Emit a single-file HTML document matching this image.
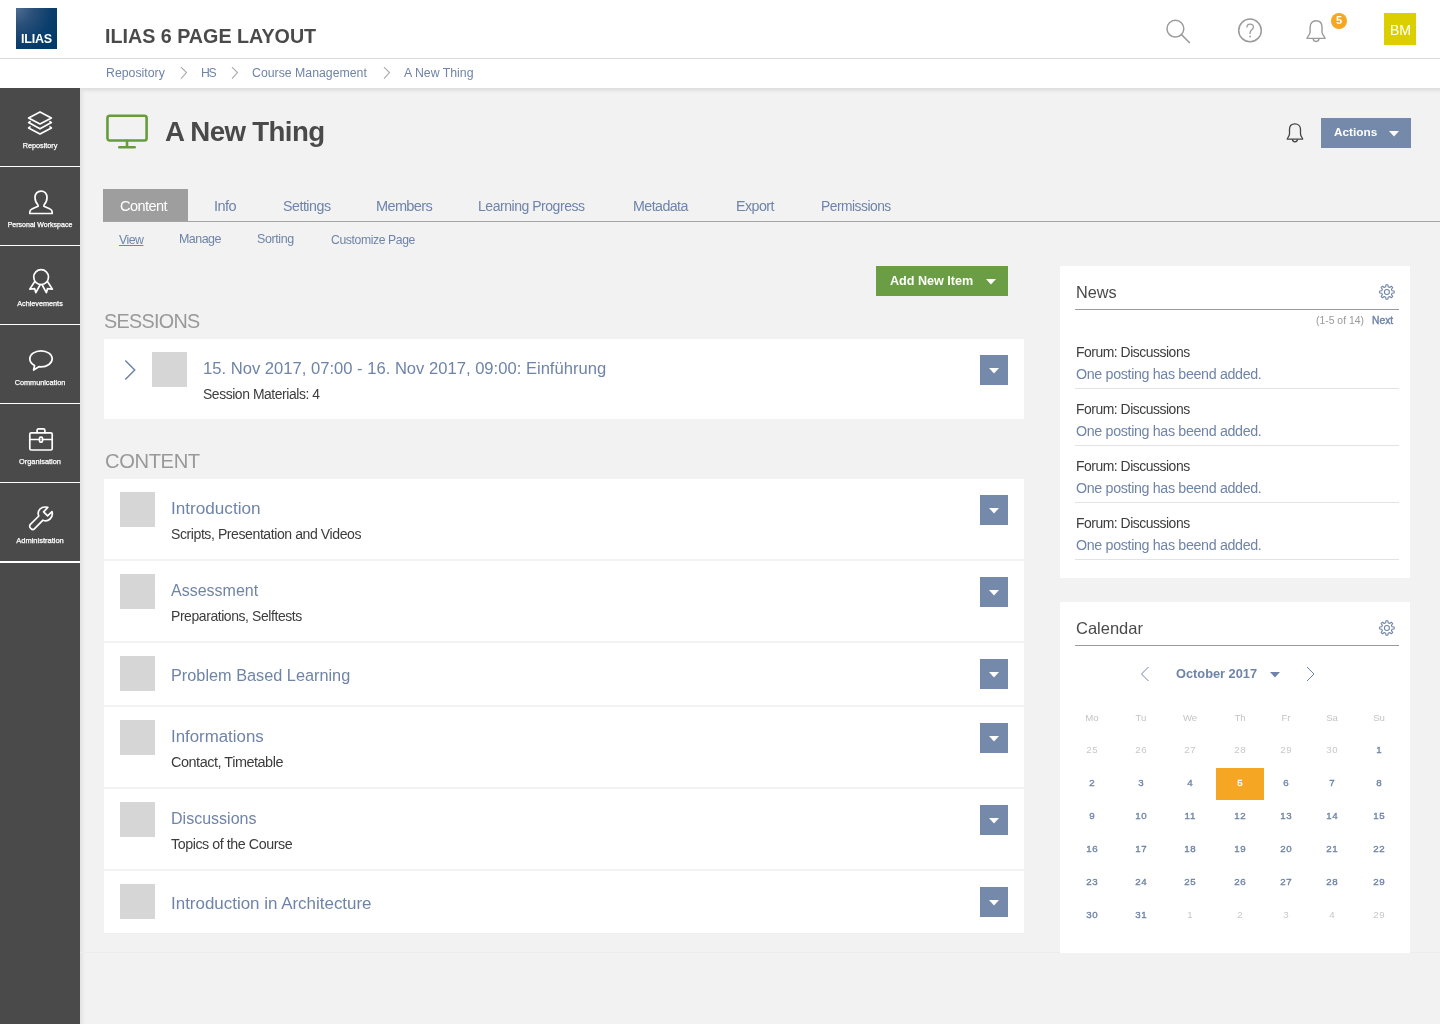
<!DOCTYPE html>
<html><head><meta charset="utf-8">
<style>
*{margin:0;padding:0;box-sizing:border-box}
html,body{width:1440px;height:1024px;overflow:hidden;background:#f2f2f2;font-family:"Liberation Sans",sans-serif}
.abs{position:absolute;display:block}
.t{position:absolute;white-space:nowrap;line-height:1;will-change:transform}
</style></head><body>
<div class="abs" style="left:0px;top:0px;width:1440px;height:58px;background:#fff;"></div>
<div class="abs" style="left:0px;top:58px;width:1440px;height:1px;background:#dadada;"></div>
<div class="abs" style="left:16px;top:8px;width:41px;height:41px;background:radial-gradient(circle at 0 0,#4f6d93 0%,#2a5079 30%,#0b3e6c 62%,#013a69 85%);"></div>
<div class="t" style="left:20.80px;top:32.67px;font-size:12.5px;color:#fff;font-weight:bold;letter-spacing:-0.2px">ILIAS</div>
<div class="t" style="left:105.00px;top:27.26px;font-size:19.7px;color:#4a4a4a;font-weight:bold;">ILIAS 6 PAGE LAYOUT</div>
<svg class="abs" style="left:1160px;top:12px" width="36" height="36" viewBox="0 0 36 36"><circle cx="15.4" cy="16.7" r="8.4" fill="none" stroke="#9b9b9b" stroke-width="1.5"/><path d="M21.5 22.6 L29.8 31" stroke="#9b9b9b" stroke-width="1.5" fill="none"/></svg>
<svg class="abs" style="left:1236px;top:16px" width="28" height="28" viewBox="0 0 28 28"><circle cx="14" cy="14.4" r="11.3" fill="none" stroke="#9b9b9b" stroke-width="1.5"/><path d="M10.9 11.4 C10.9 9.3 12.3 8.1 14.1 8.1 C16 8.1 17.4 9.4 17.4 11.2 C17.4 13.3 14.1 14.4 14.1 16.6 L14.1 18.1" fill="none" stroke="#9b9b9b" stroke-width="1.3"/><circle cx="14.1" cy="20.5" r="0.9" fill="#9b9b9b"/></svg>
<svg class="abs" style="left:1304px;top:17px" width="24" height="28" viewBox="0 0 24 28"><path d="M3 21.4 L21.1 21.4 C21.1 20.2 18 17.8 18 15.2 L18 10.2 C18 6.2 15.6 3.7 12.05 3.7 C8.5 3.7 6.1 6.2 6.1 10.2 L6.1 15.2 C6.1 17.8 3 20.2 3 21.4 Z" fill="none" stroke="#9b9b9b" stroke-width="1.4" stroke-linejoin="round"/><path d="M9.2 21.6 A2.9 2.9 0 0 0 15 21.6" fill="none" stroke="#9b9b9b" stroke-width="1.4"/></svg>
<svg class="abs" style="left:1331px;top:13px" width="16" height="16" viewBox="0 0 16 16"><circle cx="8" cy="8" r="8" fill="#f5a623"/></svg>
<div class="t" style="left:1335.50px;top:15.35px;font-size:11px;color:#fff;font-weight:bold;">5</div>
<div class="abs" style="left:1384px;top:13px;width:32px;height:32px;background:#dccf00;"></div>
<div class="t" style="left:1389.50px;top:23.10px;font-size:14px;color:#fff;font-weight:normal;">BM</div>
<div class="abs" style="left:0px;top:59px;width:1440px;height:29px;background:#fff;"></div>
<div class="t" style="left:106.00px;top:66.95px;font-size:12.3px;color:#6f84a8;font-weight:normal;">Repository</div>
<div class="t" style="left:201.30px;top:67.03px;font-size:12.2px;color:#6f84a8;font-weight:normal;letter-spacing:-1.2px">HS</div>
<div class="t" style="left:252.00px;top:66.95px;font-size:12.3px;color:#6f84a8;font-weight:normal;">Course Management</div>
<div class="t" style="left:404.00px;top:66.95px;font-size:12.3px;color:#6f84a8;font-weight:normal;">A New Thing</div>
<svg class="abs" style="left:180px;top:66px" width="9" height="14" viewBox="0 0 9 14"><path d="M1 1.2 L6.5 6.5 L1 12.6" fill="none" stroke="#a8a8a8" stroke-width="1.1"/></svg>
<svg class="abs" style="left:231px;top:66px" width="9" height="14" viewBox="0 0 9 14"><path d="M1 1.2 L6.5 6.5 L1 12.6" fill="none" stroke="#a8a8a8" stroke-width="1.1"/></svg>
<svg class="abs" style="left:382.5px;top:66px" width="9" height="14" viewBox="0 0 9 14"><path d="M1 1.2 L6.5 6.5 L1 12.6" fill="none" stroke="#a8a8a8" stroke-width="1.1"/></svg>
<div class="abs" style="left:0px;top:88px;width:80px;height:936px;background:#4a4a4a;"></div>
<div class="abs" style="left:0px;top:166px;width:80px;height:1px;background:#fff;"></div>
<div class="t" style="left:0;width:80px;text-align:center;top:141.84px;font-size:7.25px;color:#fff;-webkit-text-stroke:0.25px #fff">Repository</div>
<div class="abs" style="left:0px;top:245px;width:80px;height:1px;background:#fff;"></div>
<div class="t" style="left:0;width:80px;text-align:center;top:221.03px;font-size:7.02px;color:#fff;-webkit-text-stroke:0.25px #fff">Personal Workspace</div>
<div class="abs" style="left:0px;top:324px;width:80px;height:1px;background:#fff;"></div>
<div class="t" style="left:0;width:80px;text-align:center;top:299.84px;font-size:7.25px;color:#fff;-webkit-text-stroke:0.25px #fff">Achievements</div>
<div class="abs" style="left:0px;top:403px;width:80px;height:1px;background:#fff;"></div>
<div class="t" style="left:0;width:80px;text-align:center;top:378.80px;font-size:7.3px;color:#fff;-webkit-text-stroke:0.25px #fff">Communication</div>
<div class="abs" style="left:0px;top:482px;width:80px;height:1px;background:#fff;"></div>
<div class="t" style="left:0;width:80px;text-align:center;top:457.73px;font-size:7.38px;color:#fff;-webkit-text-stroke:0.25px #fff">Organisation</div>
<div class="abs" style="left:0px;top:561px;width:80px;height:2px;background:#fff;"></div>
<div class="t" style="left:0;width:80px;text-align:center;top:536.62px;font-size:7.5px;color:#fff;-webkit-text-stroke:0.25px #fff">Administration</div>
<svg class="abs" style="left:26px;top:109px" width="28" height="28" viewBox="0 0 28 28"><path d="M2.6 8.9 L14 2.9 L25.4 8.9 L14 14.9 Z" fill="none" stroke="#fff" stroke-width="1.7" stroke-linejoin="round" stroke-linecap="round"/><path d="M4 12.6 L2.6 13.6 L14 19.8 L25.4 13.6 L24 12.6" fill="none" stroke="#fff" stroke-width="1.7" stroke-linejoin="round" stroke-linecap="round"/><path d="M4 17.9 L2.6 18.9 L14 25 L25.4 18.9 L24 17.9" fill="none" stroke="#fff" stroke-width="1.7" stroke-linejoin="round" stroke-linecap="round"/></svg>
<svg class="abs" style="left:26px;top:188px" width="28" height="28" viewBox="0 0 28 28"><path d="M15 3.1 C18.6 3.1 21 5.8 21 9.6 C21 12.8 19.8 15.2 18 17 L17.9 18.2 L23.6 20.8 C25.3 21.6 26.2 22.5 26.2 24 L26.2 25.5 L3.8 25.5 L3.8 24 C3.8 22.5 4.7 21.6 6.4 20.8 L12.1 18.2 L12 17 C10.2 15.2 9 12.8 9 9.6 C9 5.8 11.4 3.1 15 3.1 Z" fill="none" stroke="#fff" stroke-width="1.7" stroke-linejoin="round" stroke-linecap="round"/></svg>
<svg class="abs" style="left:26px;top:267px" width="28" height="28" viewBox="0 0 28 28"><circle cx="15.1" cy="10.1" r="7.4" fill="none" stroke="#fff" stroke-width="1.7" stroke-linejoin="round" stroke-linecap="round"/><path d="M8.6 14.8 L3.8 22.1 L8.7 21.7 L9.8 25.6 L14 18" fill="none" stroke="#fff" stroke-width="1.7" stroke-linejoin="round" stroke-linecap="round"/><path d="M21.6 14.8 L26.4 22.1 L21.5 21.7 L20.4 25.6 L16.2 18" fill="none" stroke="#fff" stroke-width="1.7" stroke-linejoin="round" stroke-linecap="round"/></svg>
<svg class="abs" style="left:26px;top:346px" width="28" height="28" viewBox="0 0 28 28"><path d="M15 4.8 C21.2 4.8 26.2 8.4 26.2 12.8 C26.2 17.2 21.2 20.8 15 20.8 C14.2 20.8 13.6 20.8 12.9 20.7 L7.6 24 L8.6 19.4 C5.6 18 3.8 15.6 3.8 12.8 C3.8 8.4 8.8 4.8 15 4.8 Z" fill="none" stroke="#fff" stroke-width="1.7" stroke-linejoin="round" stroke-linecap="round"/></svg>
<svg class="abs" style="left:26px;top:426px" width="28" height="28" viewBox="0 0 28 28"><rect x="3.8" y="6.8" width="22.4" height="17.2" rx="1.4" fill="none" stroke="#fff" stroke-width="1.7" stroke-linejoin="round" stroke-linecap="round"/><path d="M11.1 6.6 L11.1 4.4 C11.1 3.4 11.6 2.8 12.6 2.8 L17.4 2.8 C18.4 2.8 18.9 3.4 18.9 4.4 L18.9 6.6" fill="none" stroke="#fff" stroke-width="1.7" stroke-linejoin="round" stroke-linecap="round"/><path d="M3.8 13.5 L13.5 13.5 M16.5 13.5 L26.2 13.5" fill="none" stroke="#fff" stroke-width="1.7" stroke-linejoin="round" stroke-linecap="round"/><rect x="13.5" y="11.1" width="3" height="5.1" rx="1.2" fill="none" stroke="#fff" stroke-width="1.7" stroke-linejoin="round" stroke-linecap="round"/></svg>
<svg class="abs" style="left:26px;top:504px" width="28" height="28" viewBox="0 0 28 28"><path d="M21.8 3.4 L17.6 7.8 L21.6 11.8 L26 7.6 C26.8 10.4 26 13.2 24 15 C22 16.8 19.2 17.2 17 16.2 L8.6 24.6 C7.6 25.6 6 25.6 5 24.6 L4.4 24 C3.4 23 3.4 21.4 4.4 20.4 L12.8 12 C11.8 9.8 12.2 7 14 5 C15.8 3.2 18.8 2.6 21.8 3.4 Z" fill="none" stroke="#fff" stroke-width="1.7" stroke-linejoin="round" stroke-linecap="round"/></svg>
<div class="abs" style="left:80px;top:88px;width:1360px;height:5px;background:linear-gradient(#dcdcdc,rgba(242,242,242,0));"></div>
<div class="abs" style="left:80px;top:88px;width:5px;height:936px;background:linear-gradient(90deg,#e2e2e2,rgba(242,242,242,0));"></div>
<svg class="abs" style="left:104px;top:113px" width="46" height="38" viewBox="0 0 46 38"><rect x="3.45" y="2.7" width="39.15" height="24.8" rx="2.2" fill="none" stroke="#659c3c" stroke-width="2.6"/><path d="M23 28 L23 34 M15.3 34.3 L30.7 34.3" stroke="#659c3c" stroke-width="2.6" stroke-linecap="round" fill="none"/></svg>
<div class="t" style="left:165.00px;top:118.09px;font-size:27.66px;color:#4a4a4a;font-weight:bold;letter-spacing:-0.638px;">A New Thing</div>
<svg class="abs" style="left:1284px;top:121px" width="22" height="24" viewBox="0 0 22 24"><path d="M3.2 18.1 L18.7 18.1 C18.7 17.2 16.5 15 16.5 13 L16.5 8.5 C16.5 5 14.2 2.9 10.95 2.9 C7.7 2.9 5.5 5 5.5 8.5 L5.5 13 C5.5 15 3.2 17.2 3.2 18.1 Z" fill="none" stroke="#444" stroke-width="1.3" stroke-linejoin="round"/><path d="M8.4 18.3 C8.4 21.6 13.5 21.6 13.5 18.3" fill="none" stroke="#444" stroke-width="1.3"/></svg>
<div class="abs" style="left:1321px;top:118px;width:90px;height:30px;background:#7589aa;"></div>
<div class="t" style="left:1334.00px;top:127.47px;font-size:11.8px;color:#fff;font-weight:bold;">Actions</div>
<svg class="abs" style="left:1389px;top:131px" width="10" height="6" viewBox="0 0 10 6"><path d="M0 0 L10 0 L5 5.5 Z" fill="#fff"/></svg>
<div class="abs" style="left:103px;top:221px;width:1337px;height:1px;background:#a5a5a5;"></div>
<div class="abs" style="left:103px;top:189px;width:85px;height:32px;background:#9e9e9e;"></div>
<div class="t" style="left:120.00px;top:199.13px;font-size:14.55px;color:#fff;font-weight:normal;letter-spacing:-0.555px;">Content</div>
<div class="t" style="left:214.00px;top:199.13px;font-size:14.55px;color:#6f84a8;font-weight:normal;letter-spacing:-0.528px;">Info</div>
<div class="t" style="left:282.50px;top:199.40px;font-size:14.23px;color:#6f84a8;font-weight:normal;letter-spacing:-0.480px;">Settings</div>
<div class="t" style="left:376.00px;top:199.13px;font-size:14.55px;color:#6f84a8;font-weight:normal;letter-spacing:-0.660px;">Members</div>
<div class="t" style="left:478.20px;top:198.98px;font-size:14.02px;color:#6f84a8;font-weight:normal;letter-spacing:-0.470px;">Learning Progress</div>
<div class="t" style="left:632.50px;top:199.40px;font-size:14.23px;color:#6f84a8;font-weight:normal;letter-spacing:-0.554px;">Metadata</div>
<div class="t" style="left:735.60px;top:199.40px;font-size:14.23px;color:#6f84a8;font-weight:normal;letter-spacing:-0.538px;">Export</div>
<div class="t" style="left:820.60px;top:199.77px;font-size:13.8px;color:#6f84a8;font-weight:normal;letter-spacing:-0.490px;">Permissions</div>
<div class="t" style="left:119.00px;top:233.54px;font-size:12.3px;color:#6f84a8;font-weight:normal;letter-spacing:-0.502px;text-decoration:underline;text-underline-offset:1px">View</div>
<div class="t" style="left:178.70px;top:233.41px;font-size:12.46px;color:#6f84a8;font-weight:normal;letter-spacing:-0.513px;">Manage</div>
<div class="t" style="left:256.60px;top:233.41px;font-size:12.46px;color:#6f84a8;font-weight:normal;letter-spacing:-0.375px;">Sorting</div>
<div class="t" style="left:331.20px;top:233.64px;font-size:12.19px;color:#6f84a8;font-weight:normal;letter-spacing:-0.389px;">Customize Page</div>
<div class="abs" style="left:876px;top:266px;width:132px;height:30px;background:#6b9e44;"></div>
<div class="t" style="left:890.00px;top:275.29px;font-size:12.6px;color:#fff;font-weight:bold;">Add New Item</div>
<svg class="abs" style="left:986px;top:279px" width="10" height="6" viewBox="0 0 10 6"><path d="M0 0 L10 0 L5 5.5 Z" fill="#fff"/></svg>
<div class="t" style="left:104.00px;top:311.67px;font-size:19.8px;color:#999;font-weight:normal;letter-spacing:-0.7px">SESSIONS</div>
<div class="abs" style="left:104px;top:339px;width:920px;height:80px;background:#fff;"></div>
<svg class="abs" style="left:120px;top:356px" width="20" height="28" viewBox="0 0 20 28"><path d="M5.3 4.5 L14.7 14.1 L5.3 23.5" fill="none" stroke="#6f84a8" stroke-width="1.5"/></svg>
<div class="abs" style="left:152px;top:352px;width:35px;height:35px;background:#d6d6d6;"></div>
<div class="t" style="left:203.00px;top:361.09px;font-size:16.6px;color:#6f84a8;font-weight:normal;">15. Nov 2017, 07:00 - 16. Nov 2017, 09:00: Einführung</div>
<div class="t" style="left:203.00px;top:387.88px;font-size:13.91px;color:#3c3c3c;font-weight:normal;letter-spacing:-0.431px;">Session Materials: 4</div>
<div class="abs" style="left:980px;top:355px;width:28px;height:30px;background:#7589aa;"></div>
<svg class="abs" style="left:989px;top:368px" width="10" height="6" viewBox="0 0 10 6"><path d="M0 0 L10 0 L5 5.5 Z" fill="#fff"/></svg>
<div class="t" style="left:104.50px;top:451.33px;font-size:20.2px;color:#999;font-weight:normal;letter-spacing:-0.4px">CONTENT</div>
<div class="abs" style="left:104px;top:479px;width:920px;height:80px;background:#fff;"></div>
<div class="abs" style="left:120px;top:492px;width:35px;height:35px;background:#d6d6d6;"></div>
<div class="t" style="left:171.00px;top:500.42px;font-size:17.15px;color:#6f84a8;font-weight:normal;">Introduction</div>
<div class="t" style="left:171.00px;top:527.04px;font-size:14.07px;color:#3c3c3c;font-weight:normal;letter-spacing:-0.430px;">Scripts, Presentation and Videos</div>
<div class="abs" style="left:980px;top:495px;width:28px;height:30px;background:#7589aa;"></div>
<svg class="abs" style="left:989px;top:508px" width="10" height="6" viewBox="0 0 10 6"><path d="M0 0 L10 0 L5 5.5 Z" fill="#fff"/></svg>
<div class="abs" style="left:104px;top:561px;width:920px;height:80px;background:#fff;"></div>
<div class="abs" style="left:120px;top:574px;width:35px;height:35px;background:#d6d6d6;"></div>
<div class="t" style="left:171.00px;top:583.40px;font-size:16.0px;color:#6f84a8;font-weight:normal;">Assessment</div>
<div class="t" style="left:171.00px;top:609.93px;font-size:13.96px;color:#3c3c3c;font-weight:normal;letter-spacing:-0.416px;">Preparations, Selftests</div>
<div class="abs" style="left:980px;top:577px;width:28px;height:30px;background:#7589aa;"></div>
<svg class="abs" style="left:989px;top:590px" width="10" height="6" viewBox="0 0 10 6"><path d="M0 0 L10 0 L5 5.5 Z" fill="#fff"/></svg>
<div class="abs" style="left:104px;top:643px;width:920px;height:62px;background:#fff;"></div>
<div class="abs" style="left:120px;top:656px;width:35px;height:35px;background:#d6d6d6;"></div>
<div class="t" style="left:171.00px;top:666.94px;font-size:16.3px;color:#6f84a8;font-weight:normal;">Problem Based Learning</div>
<div class="abs" style="left:980px;top:659px;width:28px;height:30px;background:#7589aa;"></div>
<svg class="abs" style="left:989px;top:672px" width="10" height="6" viewBox="0 0 10 6"><path d="M0 0 L10 0 L5 5.5 Z" fill="#fff"/></svg>
<div class="abs" style="left:104px;top:707px;width:920px;height:80px;background:#fff;"></div>
<div class="abs" style="left:120px;top:720px;width:35px;height:35px;background:#d6d6d6;"></div>
<div class="t" style="left:171.00px;top:728.68px;font-size:16.85px;color:#6f84a8;font-weight:normal;">Informations</div>
<div class="t" style="left:171.00px;top:754.72px;font-size:14.45px;color:#3c3c3c;font-weight:normal;letter-spacing:-0.466px;">Contact, Timetable</div>
<div class="abs" style="left:980px;top:723px;width:28px;height:30px;background:#7589aa;"></div>
<svg class="abs" style="left:989px;top:736px" width="10" height="6" viewBox="0 0 10 6"><path d="M0 0 L10 0 L5 5.5 Z" fill="#fff"/></svg>
<div class="abs" style="left:104px;top:789px;width:920px;height:80px;background:#fff;"></div>
<div class="abs" style="left:120px;top:802px;width:35px;height:35px;background:#d6d6d6;"></div>
<div class="t" style="left:171.00px;top:810.16px;font-size:16.05px;color:#6f84a8;font-weight:normal;">Discussions</div>
<div class="t" style="left:171.00px;top:836.86px;font-size:14.28px;color:#3c3c3c;font-weight:normal;letter-spacing:-0.446px;">Topics of the Course</div>
<div class="abs" style="left:980px;top:805px;width:28px;height:30px;background:#7589aa;"></div>
<svg class="abs" style="left:989px;top:818px" width="10" height="6" viewBox="0 0 10 6"><path d="M0 0 L10 0 L5 5.5 Z" fill="#fff"/></svg>
<div class="abs" style="left:104px;top:871px;width:920px;height:62px;background:#fff;"></div>
<div class="abs" style="left:120px;top:884px;width:35px;height:35px;background:#d6d6d6;"></div>
<div class="t" style="left:171.00px;top:896.39px;font-size:16.95px;color:#6f84a8;font-weight:normal;">Introduction in Architecture</div>
<div class="abs" style="left:980px;top:887px;width:28px;height:30px;background:#7589aa;"></div>
<svg class="abs" style="left:989px;top:900px" width="10" height="6" viewBox="0 0 10 6"><path d="M0 0 L10 0 L5 5.5 Z" fill="#fff"/></svg>
<div class="abs" style="left:80px;top:952px;width:1360px;height:1px;background:#ececec;"></div>
<div class="abs" style="left:104px;top:933px;width:920px;height:1px;background:#eeeeee;"></div>
<div class="abs" style="left:1060px;top:266px;width:350px;height:312px;background:#fff;"></div>
<div class="t" style="left:1076.00px;top:284.14px;font-size:16.3px;color:#4a4a4a;font-weight:normal;">News</div>
<svg class="abs" style="left:1377px;top:282px" width="20" height="20" viewBox="0 0 20 20"><path d="M8.62 4.86 L8.95 2.76 L10.85 2.76 L11.18 4.86 L12.63 5.46 L14.34 4.21 L15.69 5.56 L14.44 7.27 L15.04 8.72 L17.14 9.05 L17.14 10.95 L15.04 11.28 L14.44 12.73 L15.69 14.44 L14.34 15.79 L12.63 14.54 L11.18 15.14 L10.85 17.24 L8.95 17.24 L8.62 15.14 L7.17 14.54 L5.46 15.79 L4.11 14.44 L5.36 12.73 L4.76 11.28 L2.66 10.95 L2.66 9.05 L4.76 8.72 L5.36 7.27 L4.11 5.56 L5.46 4.21 L7.17 5.46 Z" fill="none" stroke="#6f84a8" stroke-width="1.1" stroke-linejoin="round"/><circle cx="9.9" cy="10" r="2.5" fill="none" stroke="#6f84a8" stroke-width="1.1"/></svg>
<div class="abs" style="left:1075px;top:309px;width:324px;height:1px;background:#9b9b9b;"></div>
<div class="t" style="left:1316.00px;top:316.36px;font-size:10.4px;color:#999;font-weight:normal;">(1-5 of 14)</div>
<div class="t" style="left:1372.00px;top:316.05px;font-size:10.3px;color:#6f84a8;font-weight:normal;-webkit-text-stroke:0.4px #6f84a8">Next</div>
<div class="t" style="left:1076.00px;top:346.18px;font-size:13.91px;color:#3c3c3c;font-weight:normal;letter-spacing:-0.470px;">Forum: Discussions</div>
<div class="t" style="left:1076.00px;top:367.36px;font-size:14.28px;color:#6f84a8;font-weight:normal;letter-spacing:-0.344px;">One posting has beend added.</div>
<div class="abs" style="left:1075px;top:388px;width:324px;height:1px;background:#e3e3e3;"></div>
<div class="t" style="left:1076.00px;top:403.18px;font-size:13.91px;color:#3c3c3c;font-weight:normal;letter-spacing:-0.470px;">Forum: Discussions</div>
<div class="t" style="left:1076.00px;top:424.36px;font-size:14.28px;color:#6f84a8;font-weight:normal;letter-spacing:-0.344px;">One posting has beend added.</div>
<div class="abs" style="left:1075px;top:445px;width:324px;height:1px;background:#e3e3e3;"></div>
<div class="t" style="left:1076.00px;top:460.18px;font-size:13.91px;color:#3c3c3c;font-weight:normal;letter-spacing:-0.470px;">Forum: Discussions</div>
<div class="t" style="left:1076.00px;top:481.36px;font-size:14.28px;color:#6f84a8;font-weight:normal;letter-spacing:-0.344px;">One posting has beend added.</div>
<div class="abs" style="left:1075px;top:502px;width:324px;height:1px;background:#e3e3e3;"></div>
<div class="t" style="left:1076.00px;top:517.18px;font-size:13.91px;color:#3c3c3c;font-weight:normal;letter-spacing:-0.470px;">Forum: Discussions</div>
<div class="t" style="left:1076.00px;top:538.36px;font-size:14.28px;color:#6f84a8;font-weight:normal;letter-spacing:-0.344px;">One posting has beend added.</div>
<div class="abs" style="left:1075px;top:559px;width:324px;height:1px;background:#e3e3e3;"></div>
<div class="abs" style="left:1060px;top:602px;width:350px;height:351px;background:#fff;"></div>
<div class="t" style="left:1076.00px;top:619.98px;font-size:16.5px;color:#4a4a4a;font-weight:normal;">Calendar</div>
<svg class="abs" style="left:1377px;top:618px" width="20" height="20" viewBox="0 0 20 20"><path d="M8.62 4.86 L8.95 2.76 L10.85 2.76 L11.18 4.86 L12.63 5.46 L14.34 4.21 L15.69 5.56 L14.44 7.27 L15.04 8.72 L17.14 9.05 L17.14 10.95 L15.04 11.28 L14.44 12.73 L15.69 14.44 L14.34 15.79 L12.63 14.54 L11.18 15.14 L10.85 17.24 L8.95 17.24 L8.62 15.14 L7.17 14.54 L5.46 15.79 L4.11 14.44 L5.36 12.73 L4.76 11.28 L2.66 10.95 L2.66 9.05 L4.76 8.72 L5.36 7.27 L4.11 5.56 L5.46 4.21 L7.17 5.46 Z" fill="none" stroke="#6f84a8" stroke-width="1.1" stroke-linejoin="round"/><circle cx="9.9" cy="10" r="2.5" fill="none" stroke="#6f84a8" stroke-width="1.1"/></svg>
<div class="abs" style="left:1075px;top:645px;width:324px;height:1px;background:#9b9b9b;"></div>
<svg class="abs" style="left:1138px;top:665px" width="14" height="18" viewBox="0 0 14 18"><path d="M10.5 2 L3.5 9 L10.5 16" fill="none" stroke="#6f84a8" stroke-width="1"/></svg>
<svg class="abs" style="left:1303px;top:665px" width="14" height="18" viewBox="0 0 14 18"><path d="M4 2 L11 9 L4 16" fill="none" stroke="#6f84a8" stroke-width="1"/></svg>
<div class="t" style="left:1176.00px;top:668.32px;font-size:12.8px;color:#6f84a8;font-weight:bold;">October 2017</div>
<svg class="abs" style="left:1270px;top:672px" width="10" height="6" viewBox="0 0 10 6"><path d="M0 0 L10 0 L5 5.5 Z" fill="#6f84a8"/></svg>
<div class="t" style="left:1066.50px;width:50px;text-align:center;top:713.34px;font-size:9.6px;color:#c4c4c4;font-weight:normal;">Mo</div>
<div class="t" style="left:1115.60px;width:50px;text-align:center;top:713.34px;font-size:9.6px;color:#c4c4c4;font-weight:normal;">Tu</div>
<div class="t" style="left:1164.80px;width:50px;text-align:center;top:713.34px;font-size:9.6px;color:#c4c4c4;font-weight:normal;">We</div>
<div class="t" style="left:1215.00px;width:50px;text-align:center;top:713.34px;font-size:9.6px;color:#c4c4c4;font-weight:normal;">Th</div>
<div class="t" style="left:1261.00px;width:50px;text-align:center;top:713.34px;font-size:9.6px;color:#c4c4c4;font-weight:normal;">Fr</div>
<div class="t" style="left:1307.00px;width:50px;text-align:center;top:713.34px;font-size:9.6px;color:#c4c4c4;font-weight:normal;">Sa</div>
<div class="t" style="left:1354.30px;width:50px;text-align:center;top:713.34px;font-size:9.6px;color:#c4c4c4;font-weight:normal;">Su</div>
<div class="abs" style="left:1216px;top:768px;width:48px;height:32px;background:#f5a623;"></div>
<div class="t" style="left:1066.50px;width:50px;text-align:center;top:745.46px;font-size:9.7px;color:#c8c8c8;font-weight:normal;text-indent:0.7px;letter-spacing:0.7px">25</div>
<div class="t" style="left:1115.60px;width:50px;text-align:center;top:745.46px;font-size:9.7px;color:#c8c8c8;font-weight:normal;text-indent:0.7px;letter-spacing:0.7px">26</div>
<div class="t" style="left:1164.80px;width:50px;text-align:center;top:745.46px;font-size:9.7px;color:#c8c8c8;font-weight:normal;text-indent:0.7px;letter-spacing:0.7px">27</div>
<div class="t" style="left:1215.00px;width:50px;text-align:center;top:745.46px;font-size:9.7px;color:#c8c8c8;font-weight:normal;text-indent:0.7px;letter-spacing:0.7px">28</div>
<div class="t" style="left:1261.00px;width:50px;text-align:center;top:745.46px;font-size:9.7px;color:#c8c8c8;font-weight:normal;text-indent:0.7px;letter-spacing:0.7px">29</div>
<div class="t" style="left:1307.00px;width:50px;text-align:center;top:745.46px;font-size:9.7px;color:#c8c8c8;font-weight:normal;text-indent:0.7px;letter-spacing:0.7px">30</div>
<div class="t" style="left:1354.30px;width:50px;text-align:center;top:745.46px;font-size:9.7px;color:#6f84a8;font-weight:normal;text-indent:0.7px;letter-spacing:0.7px;-webkit-text-stroke:0.35px #6f84a8">1</div>
<div class="t" style="left:1066.50px;width:50px;text-align:center;top:778.46px;font-size:9.7px;color:#6f84a8;font-weight:normal;text-indent:0.7px;letter-spacing:0.7px;-webkit-text-stroke:0.35px #6f84a8">2</div>
<div class="t" style="left:1115.60px;width:50px;text-align:center;top:778.46px;font-size:9.7px;color:#6f84a8;font-weight:normal;text-indent:0.7px;letter-spacing:0.7px;-webkit-text-stroke:0.35px #6f84a8">3</div>
<div class="t" style="left:1164.80px;width:50px;text-align:center;top:778.46px;font-size:9.7px;color:#6f84a8;font-weight:normal;text-indent:0.7px;letter-spacing:0.7px;-webkit-text-stroke:0.35px #6f84a8">4</div>
<div class="t" style="left:1215.00px;width:50px;text-align:center;top:778.46px;font-size:9.7px;color:#fff;font-weight:normal;text-indent:0.7px;letter-spacing:0.7px;-webkit-text-stroke:0.35px #fff">5</div>
<div class="t" style="left:1261.00px;width:50px;text-align:center;top:778.46px;font-size:9.7px;color:#6f84a8;font-weight:normal;text-indent:0.7px;letter-spacing:0.7px;-webkit-text-stroke:0.35px #6f84a8">6</div>
<div class="t" style="left:1307.00px;width:50px;text-align:center;top:778.46px;font-size:9.7px;color:#6f84a8;font-weight:normal;text-indent:0.7px;letter-spacing:0.7px;-webkit-text-stroke:0.35px #6f84a8">7</div>
<div class="t" style="left:1354.30px;width:50px;text-align:center;top:778.46px;font-size:9.7px;color:#6f84a8;font-weight:normal;text-indent:0.7px;letter-spacing:0.7px;-webkit-text-stroke:0.35px #6f84a8">8</div>
<div class="t" style="left:1066.50px;width:50px;text-align:center;top:811.46px;font-size:9.7px;color:#6f84a8;font-weight:normal;text-indent:0.7px;letter-spacing:0.7px;-webkit-text-stroke:0.35px #6f84a8">9</div>
<div class="t" style="left:1115.60px;width:50px;text-align:center;top:811.46px;font-size:9.7px;color:#6f84a8;font-weight:normal;text-indent:0.7px;letter-spacing:0.7px;-webkit-text-stroke:0.35px #6f84a8">10</div>
<div class="t" style="left:1164.80px;width:50px;text-align:center;top:811.46px;font-size:9.7px;color:#6f84a8;font-weight:normal;text-indent:0.7px;letter-spacing:0.7px;-webkit-text-stroke:0.35px #6f84a8">11</div>
<div class="t" style="left:1215.00px;width:50px;text-align:center;top:811.46px;font-size:9.7px;color:#6f84a8;font-weight:normal;text-indent:0.7px;letter-spacing:0.7px;-webkit-text-stroke:0.35px #6f84a8">12</div>
<div class="t" style="left:1261.00px;width:50px;text-align:center;top:811.46px;font-size:9.7px;color:#6f84a8;font-weight:normal;text-indent:0.7px;letter-spacing:0.7px;-webkit-text-stroke:0.35px #6f84a8">13</div>
<div class="t" style="left:1307.00px;width:50px;text-align:center;top:811.46px;font-size:9.7px;color:#6f84a8;font-weight:normal;text-indent:0.7px;letter-spacing:0.7px;-webkit-text-stroke:0.35px #6f84a8">14</div>
<div class="t" style="left:1354.30px;width:50px;text-align:center;top:811.46px;font-size:9.7px;color:#6f84a8;font-weight:normal;text-indent:0.7px;letter-spacing:0.7px;-webkit-text-stroke:0.35px #6f84a8">15</div>
<div class="t" style="left:1066.50px;width:50px;text-align:center;top:844.46px;font-size:9.7px;color:#6f84a8;font-weight:normal;text-indent:0.7px;letter-spacing:0.7px;-webkit-text-stroke:0.35px #6f84a8">16</div>
<div class="t" style="left:1115.60px;width:50px;text-align:center;top:844.46px;font-size:9.7px;color:#6f84a8;font-weight:normal;text-indent:0.7px;letter-spacing:0.7px;-webkit-text-stroke:0.35px #6f84a8">17</div>
<div class="t" style="left:1164.80px;width:50px;text-align:center;top:844.46px;font-size:9.7px;color:#6f84a8;font-weight:normal;text-indent:0.7px;letter-spacing:0.7px;-webkit-text-stroke:0.35px #6f84a8">18</div>
<div class="t" style="left:1215.00px;width:50px;text-align:center;top:844.46px;font-size:9.7px;color:#6f84a8;font-weight:normal;text-indent:0.7px;letter-spacing:0.7px;-webkit-text-stroke:0.35px #6f84a8">19</div>
<div class="t" style="left:1261.00px;width:50px;text-align:center;top:844.46px;font-size:9.7px;color:#6f84a8;font-weight:normal;text-indent:0.7px;letter-spacing:0.7px;-webkit-text-stroke:0.35px #6f84a8">20</div>
<div class="t" style="left:1307.00px;width:50px;text-align:center;top:844.46px;font-size:9.7px;color:#6f84a8;font-weight:normal;text-indent:0.7px;letter-spacing:0.7px;-webkit-text-stroke:0.35px #6f84a8">21</div>
<div class="t" style="left:1354.30px;width:50px;text-align:center;top:844.46px;font-size:9.7px;color:#6f84a8;font-weight:normal;text-indent:0.7px;letter-spacing:0.7px;-webkit-text-stroke:0.35px #6f84a8">22</div>
<div class="t" style="left:1066.50px;width:50px;text-align:center;top:877.46px;font-size:9.7px;color:#6f84a8;font-weight:normal;text-indent:0.7px;letter-spacing:0.7px;-webkit-text-stroke:0.35px #6f84a8">23</div>
<div class="t" style="left:1115.60px;width:50px;text-align:center;top:877.46px;font-size:9.7px;color:#6f84a8;font-weight:normal;text-indent:0.7px;letter-spacing:0.7px;-webkit-text-stroke:0.35px #6f84a8">24</div>
<div class="t" style="left:1164.80px;width:50px;text-align:center;top:877.46px;font-size:9.7px;color:#6f84a8;font-weight:normal;text-indent:0.7px;letter-spacing:0.7px;-webkit-text-stroke:0.35px #6f84a8">25</div>
<div class="t" style="left:1215.00px;width:50px;text-align:center;top:877.46px;font-size:9.7px;color:#6f84a8;font-weight:normal;text-indent:0.7px;letter-spacing:0.7px;-webkit-text-stroke:0.35px #6f84a8">26</div>
<div class="t" style="left:1261.00px;width:50px;text-align:center;top:877.46px;font-size:9.7px;color:#6f84a8;font-weight:normal;text-indent:0.7px;letter-spacing:0.7px;-webkit-text-stroke:0.35px #6f84a8">27</div>
<div class="t" style="left:1307.00px;width:50px;text-align:center;top:877.46px;font-size:9.7px;color:#6f84a8;font-weight:normal;text-indent:0.7px;letter-spacing:0.7px;-webkit-text-stroke:0.35px #6f84a8">28</div>
<div class="t" style="left:1354.30px;width:50px;text-align:center;top:877.46px;font-size:9.7px;color:#6f84a8;font-weight:normal;text-indent:0.7px;letter-spacing:0.7px;-webkit-text-stroke:0.35px #6f84a8">29</div>
<div class="t" style="left:1066.50px;width:50px;text-align:center;top:910.46px;font-size:9.7px;color:#6f84a8;font-weight:normal;text-indent:0.7px;letter-spacing:0.7px;-webkit-text-stroke:0.35px #6f84a8">30</div>
<div class="t" style="left:1115.60px;width:50px;text-align:center;top:910.46px;font-size:9.7px;color:#6f84a8;font-weight:normal;text-indent:0.7px;letter-spacing:0.7px;-webkit-text-stroke:0.35px #6f84a8">31</div>
<div class="t" style="left:1164.80px;width:50px;text-align:center;top:910.46px;font-size:9.7px;color:#c8c8c8;font-weight:normal;text-indent:0.7px;letter-spacing:0.7px">1</div>
<div class="t" style="left:1215.00px;width:50px;text-align:center;top:910.46px;font-size:9.7px;color:#c8c8c8;font-weight:normal;text-indent:0.7px;letter-spacing:0.7px">2</div>
<div class="t" style="left:1261.00px;width:50px;text-align:center;top:910.46px;font-size:9.7px;color:#c8c8c8;font-weight:normal;text-indent:0.7px;letter-spacing:0.7px">3</div>
<div class="t" style="left:1307.00px;width:50px;text-align:center;top:910.46px;font-size:9.7px;color:#c8c8c8;font-weight:normal;text-indent:0.7px;letter-spacing:0.7px">4</div>
<div class="t" style="left:1354.30px;width:50px;text-align:center;top:910.46px;font-size:9.7px;color:#c8c8c8;font-weight:normal;text-indent:0.7px;letter-spacing:0.7px">29</div>
</body></html>
